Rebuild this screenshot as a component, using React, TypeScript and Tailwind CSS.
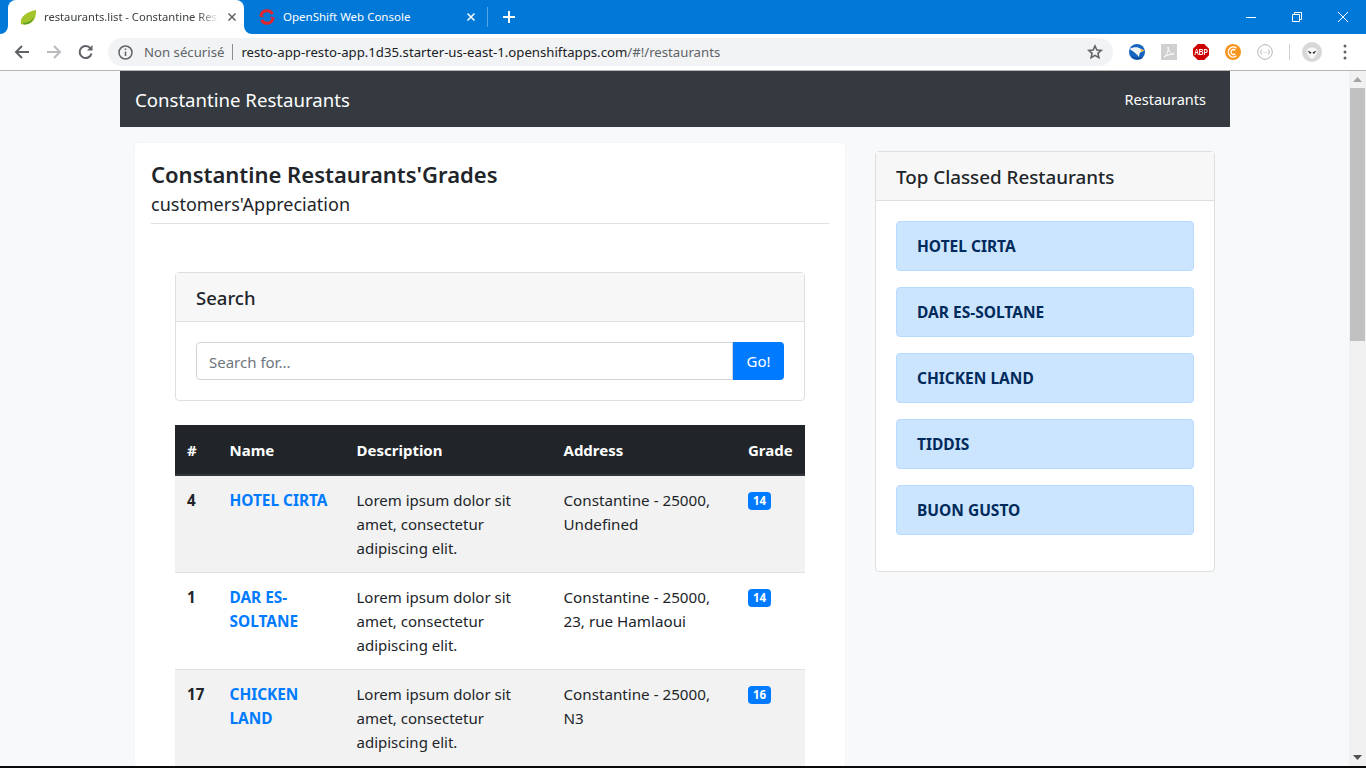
import React from "react";

const font = { fontFamily: '"Noto Sans", sans-serif' };

function Badge({ n }: { n: number }) {
  return <span className="block w-[23px] h-[18px] bg-[#007bff] text-white text-[11.5px] font-bold leading-[18px] text-center rounded-[4px]">{n}</span>;
}

function TabX({ color }: { color: string }) {
  return (
    <svg width="10" height="10" viewBox="0 0 10 10" stroke={color} strokeWidth="1.5" fill="none"><path d="M1.500 1.500l7 7M8.500 1.500l-7 7" /></svg>
  );
}

const rows = [
  { id: 4, name: ["HOTEL CIRTA"], addr: ["Constantine - 25000,", "Undefined"], g: 14, bg: "bg-[#f2f2f2]" },
  { id: 1, name: ["DAR ES-", "SOLTANE"], addr: ["Constantine - 25000,", "23, rue Hamlaoui"], g: 14, bg: "bg-white" },
  { id: 17, name: ["CHICKEN", "LAND"], addr: ["Constantine - 25000,", "N3"], g: 16, bg: "bg-[#f2f2f2]" },
];

export default function App() {
  return (
    <div className="w-[1366px] h-[768px] overflow-hidden flex flex-col bg-white" style={font}>
      <div className="h-[34px] bg-[#0078d7] flex items-end shrink-0 pl-2 text-[11.5px]">
        <div className="relative w-[236px] h-[34px] bg-white rounded-t-lg flex items-center pl-[12px] pr-[7px] text-[#3c4043]">
          <span className="absolute -left-2 bottom-0 w-2 h-2 bg-white"><span className="block w-2 h-2 bg-[#0078d7] rounded-br-lg" /></span>
          <span className="absolute -right-2 bottom-0 w-2 h-2 bg-white"><span className="block w-2 h-2 bg-[#0078d7] rounded-bl-lg" /></span>
          <svg width="17" height="17" viewBox="0 0 17 17">
            <path d="M1 15C-.500 9 5 3 16 1c.500 8-3 14-10 14.500-2 .200-4 .200-5-.500z" fill="#a4c62a" />
            <path d="M3 13.500c4 .800 8-1 11-6-1 5-5 8-9 8-1 0-2-.500-2-2z" fill="#5f9e2c" />
          </svg>
          <span className="ml-[7px] w-[175px] text-[11.2px] overflow-hidden whitespace-nowrap [mask-image:linear-gradient(to_right,black_88%,transparent)]">restaurants.list - Constantine Restaurants</span>
          <span className="ml-auto"><TabX color="#5f6368" /></span>
        </div>
        <div className="w-[243px] h-[34px] flex items-center pl-[15px] pr-[11px] text-white">
          <svg width="16" height="16" viewBox="0 0 16 16" fill="none" stroke="#e0252c" strokeWidth="3">
            <path d="M2 6.500A6.200 6.200 0 0 1 13.500 5" />
            <path d="M14 9.500A6.200 6.200 0 0 1 2.500 11" />
            <path d="M.500 6.500l4 1.200M11.500 8.300l4 1.200" strokeWidth="1.600" />
          </svg>
          <span className="ml-2">OpenShift Web Console</span>
          <span className="ml-auto"><TabX color="#ffffff" /></span>
        </div>
        <div className="w-px h-[20px] bg-[#5aa5e4] mb-[7px]" />
        <div className="w-[42px] h-[34px] flex items-center justify-center">
          <svg width="12" height="12" viewBox="0 0 12 12" stroke="#fff" strokeWidth="2"><path d="M6 0v12M0 6h12" /></svg>
        </div>
        <div className="ml-auto h-[34px] flex items-center text-white">
          <svg className="w-[46px]" height="12" viewBox="0 0 46 12"><path d="M18 6.500h10" stroke="#fff" /></svg>
          <svg className="w-[46px]" height="12" viewBox="0 0 46 12" fill="none" stroke="#fff"><path d="M18.500 3.500h7v7h-7zM20.500 3.500v-2h7v7h-2" /></svg>
          <svg className="w-[46px]" height="12" viewBox="0 0 46 12" stroke="#fff"><path d="M18 1l10 10M28 1L18 11" /></svg>
        </div>
      </div>
      <div className="h-[37px] bg-white border-b border-[#b5b5b5] flex items-center shrink-0 relative">
        <div className="w-[108px] flex items-center pl-[14px] gap-[16px]">
          <svg width="16" height="16" viewBox="0 0 16 16" fill="none" stroke="#5f6368" strokeWidth="2"><path d="M15 8H2M8 2L2 8l6 6" /></svg>
          <svg width="16" height="16" viewBox="0 0 16 16" fill="none" stroke="#b9bbbe" strokeWidth="2"><path d="M1 8h13M8 2l6 6-6 6" /></svg>
          <svg width="16" height="16" viewBox="0 0 16 16" fill="none" stroke="#5f6368" strokeWidth="2"><path d="M13.500 9.500a6 6 0 1 1-1-5" /><path d="M14.500 1v5.500H9z" fill="#5f6368" stroke="none" /></svg>
        </div>
        <div className="w-[1005px] h-7 rounded-full bg-[#f1f3f4] flex items-center pl-[10px] text-[13.2px] text-[#5f6368] whitespace-nowrap">
          <svg width="15" height="15" viewBox="0 0 15 15" fill="none" stroke="#5f6368" strokeWidth="1.500"><circle cx="7.500" cy="7.500" r="6.500" /><path d="M7.500 6.500v4.500M7.500 3.500v1.600" /></svg>
          <span className="ml-[11px] pt-px">Non sécurisé</span>
          <span className="w-px h-[16px] bg-[#8a8d91] mx-[8px]" />
          <span className="text-[#202124] pt-px">resto-app-resto-app.1d35.starter-us-east-1.openshiftapps.com</span><span className="pt-px">/#!/restaurants</span>
          <svg className="ml-auto mr-[10px]" width="16" height="16" viewBox="0 0 24 24" fill="none" stroke="#5f6368" strokeWidth="2.400"><path d="M12 3l2.800 6 6.400.7-4.800 4.300 1.400 6.400L12 17l-5.800 3.400 1.400-6.400-4.800-4.300 6.400-.7z" /></svg>
        </div>
        <div className="flex items-center ml-[16px] gap-[16px]">
          <svg width="16" height="16" viewBox="0 0 16 16">
            <circle cx="8" cy="8" r="8" fill="#1565c0" />
            <path d="M.500 5C4 3 9 2.500 12 5c1 .500 2.500 1 3.500 1.500L12 8c-1 .500-2 2-2 5C8 10 5 8 .500 5z" fill="#f2f4f6" />
            <path d="M11.500 5l4 1.500-3.500 1.200z" fill="#f0b429" />
            <path d="M2 12c2 2 5 3.500 9 3 1 0 2-1 3-2-4 1-8 1-12-1z" fill="#0d3f8a" />
          </svg>
          <svg width="16" height="16" viewBox="0 0 16 16"><rect width="16" height="16" fill="#d0d0d0" /><path d="M3 13c3-2 5-7 4-10 0 4 3 7 6 7-3 0-7 1-10 3z" fill="none" stroke="#fff" /></svg>
          <span className="w-4 h-4 bg-[#c00] text-white flex items-center justify-center overflow-hidden [clip-path:polygon(30%_0,70%_0,100%_30%,100%_70%,70%_100%,30%_100%,0_70%,0_30%)]">
            <span className="text-[6.500px] font-bold leading-none scale-y-[1.4]" style={{ fontFamily: '"Liberation Sans", sans-serif' }}>ABP</span>
          </span>
          <svg width="16" height="16" viewBox="0 0 16 16" fill="none"><circle cx="8" cy="8" r="8" fill="#f7941d" /><path d="M11.500 4.200a5 5 0 1 0 0 7.600M10.300 6.300a2.500 2.500 0 1 0 0 3.400" stroke="#fff" strokeWidth="1.300" /></svg>
          <svg width="16" height="16" viewBox="0 0 16 16" fill="none" stroke="#b4b4b4"><circle cx="8" cy="8" r="7.300" /><path d="M5 5.500c-1 0-.800 1-.800 1.500S4 8 3.500 8c.500 0 .700.500.700 1s-.200 1.500.800 1.500M11 5.500c1 0 .800 1 .800 1.500s.200 1 .700 1c-.500 0-.700.500-.700 1s.200 1.500-.800 1.500" /><path d="M6.500 8.500h3" strokeDasharray="1 1" /></svg>
          <span className="w-px h-4 bg-[#d0d0d0]" />
          <svg className="ml-[-4px]" width="20" height="20" viewBox="0 0 20 20"><circle cx="10" cy="10" r="10" fill="#d8d8d8" /><path d="M4.500 8c2-3.500 9-3.500 11 0 0 4-3 8.500-5.500 8.500S4.500 12 4.500 8z" fill="#f8f8f8" /><path d="M5.500 8.500l4 2-1.500 1.500zM14.500 8.500l-4 2 1.500 1.500z" fill="#222" /></svg>
          <svg className="ml-[5px]" width="4" height="16" viewBox="0 0 4 16" fill="#5f6368"><circle cx="2" cy="2" r="1.500" /><circle cx="2" cy="8" r="1.500" /><circle cx="2" cy="14" r="1.500" /></svg>
        </div>
      </div>
      <div className="flex-1 min-h-0 flex bg-[#f8f9fa] overflow-hidden">
        <div className="w-[1349px] shrink-0 pl-[120px] pr-[119px]">
          <nav className="h-[56px] bg-[#343a40] flex items-center justify-between pl-[15px] pr-[24px] pt-[2px] text-white">
            <span className="text-[18.600px]">Constantine Restaurants</span>
            <span className="text-[14.500px]">Restaurants</span>
          </nav>
          <div className="flex px-[15px] pt-[16px]">
            <div className="w-[710px] bg-white rounded-[4px] px-[16px] pt-[16px] shadow-[0_0_2px_rgba(0,0,0,0.05)] shrink-0">
              <h1 className="text-[22px] leading-[30px] font-semibold text-[#212529] whitespace-nowrap">Constantine Restaurants'Grades</h1>
              <h2 className="text-[18px] leading-[24px] mt-[3px] text-[#212529]">customers'Appreciation</h2>
              <div className="border-t border-[#dee2e6] mt-[7px] mb-[48px]" />
              <div className="mx-[24px] border border-[#dfdfdf] rounded-[4px] mb-[24px]">
                <div className="h-[49px] bg-[#f7f7f7] border-b border-[#dfdfdf] flex items-center px-[20px] pt-[2px] text-[18.500px] font-medium text-[#212529]">Search</div>
                <div className="p-[20px] flex">
                  <div className="flex-1 h-[38px] border border-[#ced4da] rounded-l-[4px] flex items-center px-[12px] pt-[2px] text-[15px] text-[#6c757d]">Search for...</div>
                  <div className="h-[38px] w-[51px] bg-[#007bff] text-white text-[15px] rounded-r-[4px] flex items-center justify-center">Go!</div>
                </div>
              </div>
              <div className="mx-[24px] text-[15.200px] leading-[24px] text-[#212529]">
                <div className="flex h-[51px] bg-[#212529] text-white font-bold text-[15px] border-b-2 border-[#32383e] pt-[13px]">
                  <div className="w-[54.500px] pl-[12px]">#</div>
                  <div className="w-[127px]">Name</div>
                  <div className="w-[207px]">Description</div>
                  <div className="w-[184.500px]">Address</div>
                  <div>Grade</div>
                </div>
                {rows.map((r) => (
                  <div key={r.id} className={`flex h-[97px] pt-[12px] border-b border-[#dee2e6] ${r.bg}`}>
                    <div className="w-[54.500px] pl-[12px] font-bold">{r.id}</div>
                    <div className="w-[127px] pt-px font-bold text-[15.400px] text-[#007bff]">{r.name.map((l) => <div key={l}>{l}</div>)}</div>
                    <div className="w-[207px] text-[15px]"><div>Lorem ipsum dolor sit</div><div>amet, consectetur</div><div>adipiscing elit.</div></div>
                    <div className="w-[184.500px]">{r.addr.map((l) => <div key={l}>{l}</div>)}</div>
                    <div className="pt-[4px]"><Badge n={r.g} /></div>
                  </div>
                ))}
              </div>
            </div>
            <div className="ml-[30px] w-[340px] h-[421px] mt-[8px] bg-white border border-[#dfdfdf] rounded-[4px] shrink-0">
              <div className="h-[49px] bg-[#f7f7f7] border-b border-[#dfdfdf] flex items-center px-[20px] pt-[2px] text-[18.800px] font-medium text-[#212529]">Top Classed Restaurants</div>
              <div className="p-[20px] flex flex-col gap-[16px]">
                {["HOTEL CIRTA", "DAR ES-SOLTANE", "CHICKEN LAND", "TIDDIS", "BUON GUSTO"].map((t) => (
                  <div key={t} className="h-[50px] bg-[#cce5ff] border border-[#b8daff] rounded-[4px] flex items-center px-[20px] pt-[2px] text-[15.500px] font-bold text-[#002a5c]">{t}</div>
                ))}
              </div>
            </div>
          </div>
        </div>
        <div className="w-[17px] shrink-0 bg-[#f1f1f1] flex flex-col items-center">
          <svg className="mt-[6px]" width="9" height="5" viewBox="0 0 9 5"><path d="M4.500 0L9 5H0z" fill="#a3a3a3" /></svg>
          <div className="w-[15px] h-[253px] bg-[#c1c1c1] mt-[6px]" />
          <svg className="mt-auto mb-[6px]" width="9" height="5" viewBox="0 0 9 5"><path d="M0 0h9L4.500 5z" fill="#505050" /></svg>
        </div>
      </div>
      <div className="h-[2px] bg-[#0a0a0a] shrink-0" />
    </div>
  );
}
